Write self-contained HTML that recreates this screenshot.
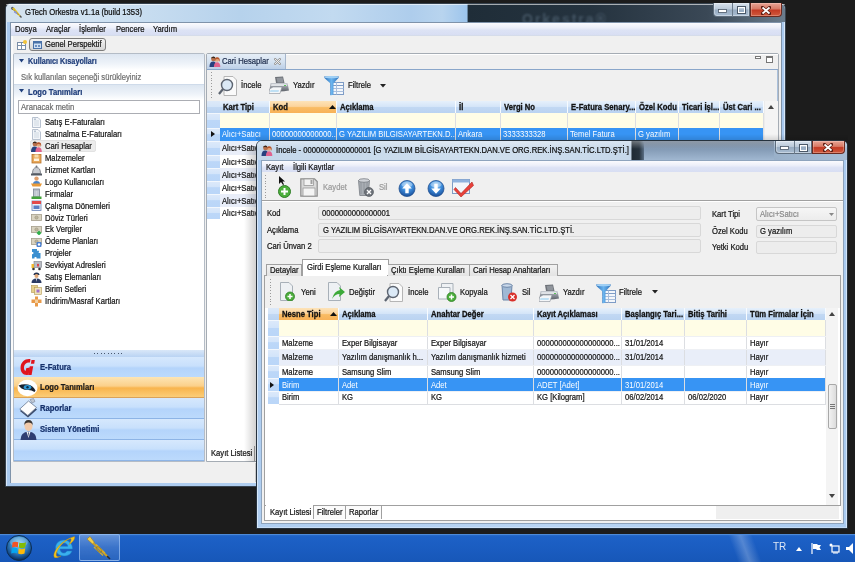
<!DOCTYPE html>
<html><head><meta charset="utf-8">
<style>
*{margin:0;padding:0;box-sizing:border-box}
html,body{width:855px;height:562px;overflow:hidden}
body{position:relative;background:#1b1b1b;font-family:"Liberation Sans",sans-serif;font-size:8px;color:#141414}
.a{position:absolute}
.t{position:absolute;white-space:nowrap;line-height:1;transform-origin:0 0;-webkit-text-stroke:0.22px currentColor}
.b{font-weight:bold}
</style></head><body>

<div class="a" style="left:0px;top:0px;width:855px;height:534px;background:#1c1c1c"></div>
<div class="a" style="left:5px;top:3px;width:781px;height:484px;border-radius:6px 6px 0 0;border:1px solid #36424e;background:linear-gradient(90deg,#a9c9ee,#b4d0f0 50%,#a9c9ee)"></div>
<div class="a" style="left:6px;top:4px;width:779px;height:482px;border-radius:5px 5px 0 0;border:1px solid rgba(255,255,255,.55);border-bottom:none"></div>
<div class="a" style="left:6px;top:4px;width:779px;height:18px;border-radius:5px 5px 0 0;background:linear-gradient(90deg,#d4e2ee 0%,#d0e2f2 12%,#b6d2ec 30%,#c2daf0 42%,#aecdec 52%,#b8d4ee 56%,#9cc4ec 59.2%,#1f2d38 59.3%,#25333f 75%,#3a4856 90%,#6a7c8c 100%)"></div>
<div class="a" style="left:6px;top:4px;width:779px;height:1px;border-radius:5px 5px 0 0;background:rgba(255,255,255,.6)"></div>
<div class="a" style="left:518px;top:4px;width:200px;height:18px;overflow:hidden"><div class="t" style="left:4px;top:8px;font-size:14px;font-weight:bold;color:#445564;-webkit-text-stroke:0;letter-spacing:2px;filter:blur(1.3px)">Orkestra®</div></div>
<svg class="a" style="left:10px;top:6px" width="12" height="12" viewBox="0 0 12 12"><ellipse cx="2.6" cy="2.4" rx="1.8" ry="1.4" transform="rotate(45 2.6 2.4)" fill="#5a6070"/><path d="M2 2.6 L4 1.4 L10.5 9.5 L9.6 10.4 Z" fill="#e0c02a"/><path d="M3.5 4 L8.5 9" stroke="#8a7010" stroke-width="0.7"/><circle cx="5" cy="6" r="1.1" fill="#8a94d8"/><circle cx="6.4" cy="7.2" r="0.9" fill="#8a94d8"/><path d="M9.8 9.8 L11.5 11.5" stroke="#555" stroke-width="1.4"/></svg>
<div class="t" style="left:25px;top:8.14px;font-size:8.5px;transform:scaleX(0.9);color:#0e0e0e">GTech Orkestra v1.1a (build 1353)</div>
<div class="a" style="left:713px;top:3px;width:37px;height:14px;border:1px solid #5d6c7c;border-top:none;border-radius:0 0 0 4px;background:linear-gradient(#d9e3ee,#b9c8d8 48%,#97abc1 52%,#a9bdd2);box-shadow:inset 0 0 0 1px rgba(255,255,255,.35)"></div>
<div class="a" style="left:732px;top:3px;width:1px;height:14px;background:#6a7a8a"></div>
<div class="a" style="left:750px;top:3px;width:32px;height:14px;border:1px solid #6a2a20;border-top:none;border-radius:0 0 4px 0;background:linear-gradient(#e9a596,#d87a66 45%,#c43a24 55%,#cf5a3e);box-shadow:inset 0 0 0 1px rgba(255,230,220,.3)"></div>
<svg class="a" style="left:718px;top:8.5px" width="9" height="4" viewBox="0 0 9 4"><rect x="0.5" y="0.5" width="8" height="3" fill="#fff" stroke="#4a5868" stroke-width="0.8"/></svg>
<svg class="a" style="left:737px;top:6.0px" width="9" height="8" viewBox="0 0 9 8"><rect x="0.8" y="0.8" width="7.4" height="6.4" fill="none" stroke="#4a5868" stroke-width="1.6"/><rect x="1.5" y="1.5" width="6" height="5" fill="none" stroke="#fff" stroke-width="1"/></svg>
<svg class="a" style="left:761px;top:5.5px" width="10" height="9" viewBox="0 0 10 9"><path d="M1.5 1.5 L8.5 7.5 M8.5 1.5 L1.5 7.5" stroke="#5a1a10" stroke-width="3.2" stroke-linecap="square"/><path d="M1.5 1.5 L8.5 7.5 M8.5 1.5 L1.5 7.5" stroke="#fff" stroke-width="1.8"/></svg>
<div class="a" style="left:10px;top:22px;width:772px;height:461px;background:#f0f0f0;border:1px solid #7f93aa"></div>
<div class="a" style="left:11px;top:23px;width:770px;height:12px;background:linear-gradient(#fbfbfe,#eceff9 40%,#dde3f5 60%,#d8def3)"></div>
<div class="a" style="left:11px;top:35px;width:770px;height:1px;background:#d5dcea"></div>
<div class="t" style="left:15px;top:24.84px;font-size:8.5px;transform:scaleX(0.9);">Dosya</div>
<div class="t" style="left:46px;top:24.84px;font-size:8.5px;transform:scaleX(0.9);">Araçlar</div>
<div class="t" style="left:79px;top:24.84px;font-size:8.5px;transform:scaleX(0.9);">İşlemler</div>
<div class="t" style="left:116px;top:24.84px;font-size:8.5px;transform:scaleX(0.9);">Pencere</div>
<div class="t" style="left:153px;top:24.84px;font-size:8.5px;transform:scaleX(0.9);">Yardım</div>
<svg class="a" style="left:17px;top:40px" width="10" height="10" viewBox="0 0 10 10"><rect x="0.5" y="2.5" width="8" height="7" fill="#fff" stroke="#7a8ea8"/><line x1="0.5" y1="5.5" x2="8.5" y2="5.5" stroke="#7a8ea8"/><line x1="4.5" y1="2.5" x2="4.5" y2="9.5" stroke="#7a8ea8"/><circle cx="8" cy="2" r="2" fill="#f3c53a"/></svg>
<div class="a" style="left:29px;top:38px;width:77px;height:13px;border:1px solid #7d7d7d;border-radius:3px;background:linear-gradient(#f6f6f6,#e3e3e3 50%,#d6d6d6)"></div>
<svg class="a" style="left:33px;top:41px" width="9" height="8" viewBox="0 0 9 8"><rect x="0.5" y="0.5" width="8" height="7" fill="#cfe0f4" stroke="#4a72a8"/><rect x="0.5" y="0.5" width="8" height="2" fill="#4a72a8"/><rect x="2" y="4" width="2" height="2" fill="#6d8fbf"/><rect x="5" y="4" width="2" height="2" fill="#6d8fbf"/></svg>
<div class="t" style="left:45px;top:40.34px;font-size:8.5px;transform:scaleX(0.9);">Genel Perspektif</div>
<div class="a" style="left:13px;top:53px;width:192px;height:409px;background:#fff;border:1px solid #b4bcc6;border-radius:2px 2px 0 0"></div>
<div class="a" style="left:11px;top:36px;width:2px;height:426px;background:#fafafa"></div>
<div class="a" style="left:14px;top:54px;width:190px;height:16px;background:linear-gradient(#dde6f1,#eef3f9 60%,#fff)"></div>
<svg class="a" style="left:19px;top:59px" width="5" height="4" viewBox="0 0 5 4"><path d="M0 0 H5 L2.5 3.5 Z" fill="#1f3f7c"/></svg>
<div class="t" style="left:28.4px;top:57.34px;font-size:8.5px;transform:scaleX(0.85);color:#1d3b78;font-weight:bold">Kullanıcı Kısayolları</div>
<div class="t" style="left:21px;top:73.43px;font-size:8.5px;transform:scaleX(0.9);color:#707070">Sık kullanılan seçeneği sürükleyiniz</div>
<div class="a" style="left:14px;top:84px;width:190px;height:1px;background:#cfdbea"></div>
<div class="a" style="left:14px;top:85px;width:190px;height:15px;background:linear-gradient(#dde6f1,#eef3f9 60%,#fff)"></div>
<svg class="a" style="left:19px;top:89px" width="5" height="4" viewBox="0 0 5 4"><path d="M0 0 H5 L2.5 3.5 Z" fill="#1f3f7c"/></svg>
<div class="t" style="left:28px;top:87.63px;font-size:8.5px;transform:scaleX(0.9);color:#1d3b78;font-weight:bold">Logo Tanımları</div>
<div class="a" style="left:18px;top:100px;width:182px;height:14px;border:1px solid #abadb3;background:#fff"></div>
<div class="t" style="left:21px;top:102.83px;font-size:8.5px;transform:scaleX(0.9);color:#6d6d6d">Aranacak metin</div>
<svg class="a" style="left:31px;top:117px" width="11" height="11" viewBox="0 0 11 11"><path d="M1.5 0.5 H7 L9.5 3 V10.5 H1.5 Z" fill="#f2f5f9" stroke="#a7b4c4" stroke-width="0.8"/><path d="M3 4 H8 M3 6 H8 M3 8 H8" stroke="#c5d0dc" stroke-width="0.8"/><rect x="3" y="1.5" width="2" height="1.5" fill="#b8c4d2"/></svg>
<div class="t" style="left:45px;top:118.33px;font-size:8.5px;transform:scaleX(0.9);">Satış E-Faturaları</div>
<svg class="a" style="left:31px;top:129px" width="11" height="11" viewBox="0 0 11 11"><path d="M1.5 0.5 H7 L9.5 3 V10.5 H1.5 Z" fill="#f2f5f9" stroke="#a7b4c4" stroke-width="0.8"/><path d="M3 4 H8 M3 6 H8 M3 8 H8" stroke="#c5d0dc" stroke-width="0.8"/><rect x="3" y="1.5" width="2" height="1.5" fill="#b8c4d2"/></svg>
<div class="t" style="left:45px;top:130.24px;font-size:8.5px;transform:scaleX(0.9);">Satınalma E-Faturaları</div>
<div class="a" style="left:30px;top:140.3px;width:66px;height:12px;background:#ececec;border:1px solid #e2e2e2;border-radius:2px"></div>
<svg class="a" style="left:31px;top:141px" width="11" height="11" viewBox="0 0 11 11"><circle cx="3.8" cy="3" r="2.2" fill="#b8704a"/><path d="M3.8 0.6 Q1.4 0.8 1.6 3 L2 2.2 Q3.8 1.6 5.8 2.4 Q6 0.8 3.8 0.6Z" fill="#3b2a1e"/><path d="M0 11 Q0 5.6 3.8 5.6 Q6.8 5.6 6.8 11 Z" fill="#27407e"/><circle cx="7.6" cy="3.6" r="2.2" fill="#e2a67a"/><path d="M7.6 1.2 Q5 1.2 5.2 4.6 L5.6 6 L6 3.4 Q7.6 2.4 9.4 3.4 L9.8 6 L10.2 4.6 Q10.4 1.2 7.6 1.2Z" fill="#b5562c"/><path d="M4.4 11 Q4.4 6.2 7.6 6.2 Q10.8 6.2 10.8 11 Z" fill="#e0628e"/></svg>
<div class="t" style="left:45px;top:142.14px;font-size:8.5px;transform:scaleX(0.9);">Cari Hesaplar</div>
<svg class="a" style="left:31px;top:153px" width="11" height="11" viewBox="0 0 11 11"><rect x="1" y="1.5" width="9" height="8.5" fill="#e9a95a" stroke="#b8752e" stroke-width="0.8"/><rect x="3.5" y="1.5" width="4" height="3" fill="#f6dcae"/><rect x="3" y="5.5" width="5" height="2.5" fill="#fff3de"/></svg>
<div class="t" style="left:45px;top:154.03px;font-size:8.5px;transform:scaleX(0.9);">Malzemeler</div>
<svg class="a" style="left:31px;top:165px" width="11" height="11" viewBox="0 0 11 11"><path d="M1.5 8.5 Q1.5 2.5 5.5 2.5 Q9.5 2.5 9.5 8.5 Z" fill="#c9ccd2" stroke="#6e737b" stroke-width="0.8"/><rect x="0" y="8.5" width="11" height="2" fill="#555b64"/><circle cx="5.5" cy="1.5" r="1" fill="#6e737b"/></svg>
<div class="t" style="left:45px;top:165.94px;font-size:8.5px;transform:scaleX(0.9);">Hizmet Kartları</div>
<svg class="a" style="left:31px;top:176px" width="11" height="11" viewBox="0 0 11 11"><circle cx="5.5" cy="2.6" r="2.2" fill="#e0a070"/><path d="M2 8 Q2 5 5.5 5 Q9 5 9 8 Z" fill="#4a84c8"/><path d="M0 7.5 H11 L9.5 10.5 H1.5 Z" fill="#e89a3a"/></svg>
<div class="t" style="left:45px;top:177.84px;font-size:8.5px;transform:scaleX(0.9);">Logo Kullanıcıları</div>
<svg class="a" style="left:31px;top:188px" width="11" height="11" viewBox="0 0 11 11"><rect x="2.5" y="1" width="6" height="8" fill="#b7bec8" stroke="#7d8794" stroke-width="0.8"/><path d="M4 3 V8 M5.5 3 V8 M7 3 V8" stroke="#dfe4ea" stroke-width="0.6"/><rect x="0.5" y="8.5" width="10" height="2.5" fill="#43a33b"/></svg>
<div class="t" style="left:45px;top:189.74px;font-size:8.5px;transform:scaleX(0.9);">Firmalar</div>
<svg class="a" style="left:31px;top:200px" width="11" height="11" viewBox="0 0 11 11"><rect x="1" y="1" width="9" height="9.5" fill="#e9f0fa" stroke="#6a86b8" stroke-width="0.8"/><rect x="1" y="1" width="9" height="3" fill="#e34a4a"/><rect x="2.5" y="5.5" width="6" height="3.5" fill="#5a7fc4"/></svg>
<div class="t" style="left:45px;top:201.64px;font-size:8.5px;transform:scaleX(0.9);">Çalışma Dönemleri</div>
<svg class="a" style="left:31px;top:212px" width="11" height="11" viewBox="0 0 11 11"><rect x="0.5" y="2.5" width="10" height="6" fill="#d9d3c0" stroke="#a59f8c" stroke-width="0.8"/><circle cx="5.5" cy="5.5" r="1.6" fill="#bdb59c" stroke="#8f8874" stroke-width="0.5"/></svg>
<div class="t" style="left:45px;top:213.53px;font-size:8.5px;transform:scaleX(0.9);">Döviz Türleri</div>
<svg class="a" style="left:31px;top:224px" width="11" height="11" viewBox="0 0 11 11"><rect x="0.5" y="2.5" width="10" height="6" fill="#d9d3c0" stroke="#a59f8c" stroke-width="0.8"/><circle cx="5.5" cy="5.5" r="1.6" fill="#bdb59c" stroke="#8f8874" stroke-width="0.5"/><path d="M8 6.5 L10.5 9 L8 11.5 L5.5 9 Z" fill="#2fb04a"/></svg>
<div class="t" style="left:45px;top:225.44px;font-size:8.5px;transform:scaleX(0.9);">Ek Vergiler</div>
<svg class="a" style="left:31px;top:236px" width="11" height="11" viewBox="0 0 11 11"><rect x="0.5" y="2.5" width="10" height="6" fill="#d9d3c0" stroke="#a59f8c" stroke-width="0.8"/><circle cx="5.5" cy="5.5" r="1.6" fill="#bdb59c" stroke="#8f8874" stroke-width="0.5"/><rect x="5.5" y="6" width="5" height="5" rx="1" fill="#4a7fd0"/><circle cx="8" cy="8.5" r="1.2" fill="#fff"/></svg>
<div class="t" style="left:45px;top:237.34px;font-size:8.5px;transform:scaleX(0.9);">Ödeme Planları</div>
<svg class="a" style="left:31px;top:248px" width="11" height="11" viewBox="0 0 11 11"><path d="M3 1 H6 V3 Q7.5 2 8 3.5 Q8.5 5 6.5 5 H9.5 V10.5 H5.5 Q6 9 4.5 9 Q3 9 3.5 10.5 H1 V6 Q2.5 6.5 2.5 5 Q2.5 3.5 1 4 V1 Z" fill="#3a8fd0"/></svg>
<div class="t" style="left:45px;top:249.24px;font-size:8.5px;transform:scaleX(0.9);">Projeler</div>
<svg class="a" style="left:31px;top:260px" width="11" height="11" viewBox="0 0 11 11"><rect x="3" y="1.5" width="7.5" height="6" fill="#b8bcc4" stroke="#7a7f88" stroke-width="0.6"/><path d="M0.5 4 H3 V8 H0.5 Z" fill="#f0b830"/><circle cx="2.5" cy="9" r="1.3" fill="#333"/><circle cx="8.5" cy="9" r="1.3" fill="#333"/><path d="M6 5 Q6 3.8 7 3.8 Q8 3.8 8 5 L7 7.5 Z" fill="#e0303a"/></svg>
<div class="t" style="left:45px;top:261.13px;font-size:8.5px;transform:scaleX(0.9);">Sevkiyat Adresleri</div>
<svg class="a" style="left:31px;top:272px" width="11" height="11" viewBox="0 0 11 11"><path d="M2.5 3 Q2.5 0.5 5.5 0.5 Q8.5 0.5 8.5 3 Z" fill="#22304e"/><circle cx="5.5" cy="4" r="2" fill="#e0a878"/><path d="M0.5 11 Q0.5 6.5 5.5 6.5 Q10.5 6.5 10.5 11 Z" fill="#2a3a62"/><path d="M5 6.5 L5.5 10 L6 6.5 Z" fill="#fff"/></svg>
<div class="t" style="left:45px;top:273.04px;font-size:8.5px;transform:scaleX(0.9);">Satış Elemanları</div>
<svg class="a" style="left:31px;top:284px" width="11" height="11" viewBox="0 0 11 11"><rect x="0.5" y="1.5" width="6" height="7" fill="#e6cf8c" stroke="#b49a52" stroke-width="0.6"/><rect x="3.5" y="3.5" width="7" height="7" fill="#efe2b8" stroke="#b49a52" stroke-width="0.6"/><rect x="5.5" y="5.5" width="3" height="3" fill="#a070c8"/></svg>
<div class="t" style="left:45px;top:284.94px;font-size:8.5px;transform:scaleX(0.9);">Birim Setleri</div>
<svg class="a" style="left:31px;top:296px" width="11" height="11" viewBox="0 0 11 11"><path d="M4 0.5 H7 V3.5 H10.5 V7 H7 V10.5 H4 V7 H0.5 V3.5 H4 Z" fill="#e89a4a"/><rect x="4" y="3.5" width="3" height="3.5" fill="#f4d0a0"/></svg>
<div class="t" style="left:45px;top:296.83px;font-size:8.5px;transform:scaleX(0.9);">İndirim/Masraf Kartları</div>
<div class="a" style="left:14px;top:350px;width:190px;height:7px;background:linear-gradient(#d9e7f8,#b9d3f3)"></div>
<div class="a" style="left:94.0px;top:353px;width:1px;height:1px;background:#4a5a70"></div>
<div class="a" style="left:97.4px;top:353px;width:1px;height:1px;background:#4a5a70"></div>
<div class="a" style="left:100.8px;top:353px;width:1px;height:1px;background:#4a5a70"></div>
<div class="a" style="left:104.2px;top:353px;width:1px;height:1px;background:#4a5a70"></div>
<div class="a" style="left:107.6px;top:353px;width:1px;height:1px;background:#4a5a70"></div>
<div class="a" style="left:111.0px;top:353px;width:1px;height:1px;background:#4a5a70"></div>
<div class="a" style="left:114.4px;top:353px;width:1px;height:1px;background:#4a5a70"></div>
<div class="a" style="left:117.8px;top:353px;width:1px;height:1px;background:#4a5a70"></div>
<div class="a" style="left:121.2px;top:353px;width:1px;height:1px;background:#4a5a70"></div>
<div class="a" style="left:14px;top:357px;width:190px;height:21px;background:linear-gradient(#d6e8fd,#c8e0fc 45%,#b4d4fb 55%,#bcdafc);border-bottom:1px solid #8db4e6"></div>
<div class="t" style="left:39.5px;top:363.33px;font-size:8.5px;transform:scaleX(0.9);color:#15306a;font-weight:bold">E-Fatura</div>
<div class="a" style="left:14px;top:377px;width:190px;height:21px;background:linear-gradient(#fde5b4,#fbd08a 45%,#f8b44d 55%,#fbcd78);border-bottom:1px solid #d9a25a"></div>
<div class="t" style="left:39.5px;top:383.33px;font-size:8.5px;transform:scaleX(0.9);color:#1a1a1a;font-weight:bold">Logo Tanımları</div>
<div class="a" style="left:14px;top:398px;width:190px;height:21px;background:linear-gradient(#d6e8fd,#c8e0fc 45%,#b4d4fb 55%,#bcdafc);border-bottom:1px solid #8db4e6"></div>
<div class="t" style="left:39.5px;top:404.33px;font-size:8.5px;transform:scaleX(0.9);color:#15306a;font-weight:bold">Raporlar</div>
<div class="a" style="left:14px;top:419px;width:190px;height:21px;background:linear-gradient(#d6e8fd,#c8e0fc 45%,#b4d4fb 55%,#bcdafc);border-bottom:1px solid #8db4e6"></div>
<div class="t" style="left:39.5px;top:425.33px;font-size:8.5px;transform:scaleX(0.9);color:#15306a;font-weight:bold">Sistem Yönetimi</div>
<div class="a" style="left:14px;top:440px;width:190px;height:21px;background:linear-gradient(#d6e8fd,#c8e0fc 45%,#b4d4fb 55%,#bcdafc);border-bottom:1px solid #8db4e6"></div>
<svg class="a" style="left:19px;top:358px" width="17" height="18" viewBox="0 0 17 18"><path d="M11.5 1.2 C6 0.5 2 4 1.6 9 C1.2 14 4 17.2 8 17 L9.5 16.8 L11 9.5 L7.2 10.2 L6.8 12.8 C5.2 12.6 4.8 11 5 9 C5.4 5.5 8 4 11 4.5 Z" fill="#e0141e"/><path d="M10.8 8.2 H14.2 L12.6 17 H9.2 Z" fill="#e0141e"/><path d="M12.5 2 H15.8 L15.2 5.8 H11.9 Z" fill="#e0141e"/></svg>
<svg class="a" style="left:17px;top:379px" width="21" height="18" viewBox="0 0 21 18"><ellipse cx="10.5" cy="9" rx="10" ry="8.3" fill="#fff"/><path d="M1.5 6.5 Q6 4.5 11 5.5 Q16 6.5 18.5 11.5 L17.5 13 Q14 10.5 10 11 Q5 10.5 3 8 Z" fill="#1a2330"/><ellipse cx="10.5" cy="8.3" rx="3.8" ry="2.4" fill="#2f9ad8"/><circle cx="10.5" cy="8.3" r="1.2" fill="#0d2a44"/></svg>
<svg class="a" style="left:19px;top:398px" width="19" height="20" viewBox="0 0 19 20"><path d="M1 13 L10 5 L18 11.5 L9 19.5 Z" fill="#3a4a6a"/><path d="M0.8 11 L9.5 3 L17.5 9.5 L8.8 17.5 Z" fill="#fdfdfd" stroke="#6a7890" stroke-width="0.8"/><path d="M11 1.5 L14.5 0.5 L16 3.5 L13 5 Z" fill="#c0c8d4" stroke="#7a8498" stroke-width="0.6"/></svg>
<svg class="a" style="left:20px;top:419px" width="17" height="21" viewBox="0 0 17 21"><path d="M0.5 21 Q0.5 13 8.5 12.5 Q16.5 13 16.5 21 Z" fill="#2e3d72"/><path d="M6.5 12.8 L8.5 19 L10.5 12.8 Z" fill="#f4f4f4"/><path d="M8 13.5 L8.5 18 L9 13.5 Z" fill="#253060"/><ellipse cx="8.5" cy="7" rx="4" ry="5" fill="#f0c8a8"/><path d="M4.3 6.5 Q4 1 8.5 1 Q13 1 12.7 6.5 Q12 3.5 8.5 3.5 Q5 3.5 4.3 6.5 Z" fill="#3a3430"/></svg>
<div class="a" style="left:206px;top:53px;width:573px;height:409px;background:#f0f0f0;border:1px solid #a5acb4;border-radius:2px 2px 0 0"></div>
<div class="a" style="left:207px;top:54px;width:571px;height:15px;background:#f0f0f0;border-top:1px solid #fff;border-left:1px solid #fff"></div>
<div class="a" style="left:207px;top:54px;width:79px;height:15px;background:linear-gradient(#e6eef7,#d3e1f0 55%,#bccfe7);border-right:1px solid #a5b6cc"></div>
<svg class="a" style="left:209px;top:56px" width="12" height="11" viewBox="0 0 11 11"><circle cx="3.8" cy="3" r="2.2" fill="#b8704a"/><path d="M3.8 0.6 Q1.4 0.8 1.6 3 L2 2.2 Q3.8 1.6 5.8 2.4 Q6 0.8 3.8 0.6Z" fill="#3b2a1e"/><path d="M0 11 Q0 5.6 3.8 5.6 Q6.8 5.6 6.8 11 Z" fill="#27407e"/><circle cx="7.6" cy="3.6" r="2.2" fill="#e2a67a"/><path d="M7.6 1.2 Q5 1.2 5.2 4.6 L5.6 6 L6 3.4 Q7.6 2.4 9.4 3.4 L9.8 6 L10.2 4.6 Q10.4 1.2 7.6 1.2Z" fill="#b5562c"/><path d="M4.4 11 Q4.4 6.2 7.6 6.2 Q10.8 6.2 10.8 11 Z" fill="#e0628e"/></svg>
<div class="t" style="left:222px;top:57.34px;font-size:8.5px;transform:scaleX(0.9);color:#1b2a4a">Cari Hesaplar</div>
<svg class="a" style="left:274px;top:58px" width="7" height="7" viewBox="0 0 7 7"><path d="M1 1 L6 6 M6 1 L1 6" stroke="#9a9a9a" stroke-width="2.4" stroke-linecap="round"/><path d="M1 1 L6 6 M6 1 L1 6" stroke="#f4f4f4" stroke-width="0.9" stroke-linecap="round"/></svg>
<div class="a" style="left:755px;top:56px;width:6px;height:3px;border:1px solid #777;background:#fff"></div>
<div class="a" style="left:766px;top:56px;width:7px;height:7px;border:1px solid #777;border-top-width:2px;background:#fff"></div>
<div class="a" style="left:207px;top:69px;width:571px;height:1px;background:#8aa6ca"></div>
<div class="a" style="left:777px;top:70px;width:1px;height:391px;background:#a9c0dc"></div>
<div class="a" style="left:211px;top:72.0px;width:1px;height:1px;background:#9a9a9a"></div>
<div class="a" style="left:211px;top:74.8px;width:1px;height:1px;background:#9a9a9a"></div>
<div class="a" style="left:211px;top:77.6px;width:1px;height:1px;background:#9a9a9a"></div>
<div class="a" style="left:211px;top:80.4px;width:1px;height:1px;background:#9a9a9a"></div>
<div class="a" style="left:211px;top:83.2px;width:1px;height:1px;background:#9a9a9a"></div>
<div class="a" style="left:211px;top:86.0px;width:1px;height:1px;background:#9a9a9a"></div>
<div class="a" style="left:211px;top:88.8px;width:1px;height:1px;background:#9a9a9a"></div>
<div class="a" style="left:211px;top:91.6px;width:1px;height:1px;background:#9a9a9a"></div>
<div class="a" style="left:211px;top:94.4px;width:1px;height:1px;background:#9a9a9a"></div>
<div class="a" style="left:211px;top:97.2px;width:1px;height:1px;background:#9a9a9a"></div>
<svg class="a" style="left:218px;top:76px" width="19" height="20" viewBox="0 0 19 20"><path d="M6 0.5 H15 L18.5 4 V19.5 H6 Z" fill="#fafafa" stroke="#b5b5b5"/><circle cx="9" cy="9" r="5.5" fill="#dbe9f6" stroke="#5c6470" stroke-width="1.4"/><path d="M5 13 L1 18" stroke="#5c6470" stroke-width="2.2"/></svg>
<div class="t" style="left:241px;top:81.43px;font-size:8.5px;transform:scaleX(0.9);">İncele</div>
<svg class="a" style="left:269px;top:76px" width="21" height="18" viewBox="0 0 21 18"><defs><linearGradient id="pg1" x1="0" y1="0" x2="0" y2="1"><stop offset="0" stop-color="#c8ccd2"/><stop offset="0.5" stop-color="#8e939b"/><stop offset="1" stop-color="#5d626a"/></linearGradient></defs><path d="M6 1 L14 0.5 L15.5 7 H7 Z" fill="#6d7178"/><path d="M7.5 2 L13.5 1.6 L14.5 6.5 H8.5 Z" fill="#8f949b"/><path d="M1.5 7 H18.5 L20 14.5 Q10 16.5 0.5 14.5 Z" fill="url(#pg1)"/><path d="M2.5 8 H17.5 L18 10 H2 Z" fill="#dfe2e6"/><path d="M0.5 13 L4 11 H13 L11 17.5 H0 Z" fill="#f4f6f8" stroke="#8a9098" stroke-width="0.6"/><path d="M1.5 14 H10 L9.5 16 H1 Z" fill="#bfe0f4"/><rect x="15" y="9" width="2" height="1" fill="#58c058"/></svg>
<div class="t" style="left:293px;top:81.43px;font-size:8.5px;transform:scaleX(0.9);">Yazdır</div>
<svg class="a" style="left:324px;top:76px" width="20" height="20" viewBox="0 0 20 20"><defs><linearGradient id="fg1" x1="0" x2="1"><stop offset="0" stop-color="#2d6fb8"/><stop offset="0.5" stop-color="#6ab4ee"/><stop offset="1" stop-color="#2d6fb8"/></linearGradient></defs><rect x="6.5" y="6.5" width="13" height="12" fill="#f4f7fb" stroke="#7e9cc6"/><line x1="6.5" y1="9.5" x2="19.5" y2="9.5" stroke="#7e9cc6"/><line x1="6.5" y1="12.5" x2="19.5" y2="12.5" stroke="#a9bedc"/><line x1="6.5" y1="15.5" x2="19.5" y2="15.5" stroke="#a9bedc"/><line x1="12.5" y1="6.5" x2="12.5" y2="18.5" stroke="#a9bedc"/><path d="M0 0.5 H15 Q15 2 13 3.5 L9.5 7.5 V18.5 L6.5 19.5 V7.5 L2 3.5 Q0 2 0 0.5 Z" fill="url(#fg1)"/><ellipse cx="7.5" cy="1.2" rx="7.3" ry="1.1" fill="#9fd0f6"/></svg>
<div class="t" style="left:348px;top:81.43px;font-size:8.5px;transform:scaleX(0.9);">Filtrele</div>
<svg class="a" style="left:380px;top:84px" width="6" height="4" viewBox="0 0 6 4"><path d="M0 0 H6 L3 3.5 Z" fill="#222"/></svg>
<div class="a" style="left:207px;top:101px;width:571px;height:360px;background:#fff"></div>
<div class="a" style="left:207px;top:101px;width:557px;height:12px;background:linear-gradient(#e6f0fb,#d3e4f8 50%,#c2d8f3 51%,#bad3f1)"></div>
<div class="a" style="left:270px;top:101px;width:67px;height:12px;background:linear-gradient(#fde3b8,#fcd49c 45%,#f9bc64 55%,#f8b258)"></div>
<div class="a" style="left:269px;top:101px;width:1px;height:12px;background:#f7fbff"></div>
<div class="t" style="left:223px;top:102.83px;font-size:8.5px;transform:scaleX(0.9);font-weight:bold;color:#121212;-webkit-text-stroke:0.3px #121212">Kart Tipi</div>
<div class="a" style="left:336px;top:101px;width:1px;height:12px;background:#f7fbff"></div>
<div class="t" style="left:273px;top:102.83px;font-size:8.5px;transform:scaleX(0.9);font-weight:bold;color:#121212;-webkit-text-stroke:0.3px #121212">Kod</div>
<div class="a" style="left:455px;top:101px;width:1px;height:12px;background:#f7fbff"></div>
<div class="t" style="left:340px;top:102.83px;font-size:8.5px;transform:scaleX(0.9);font-weight:bold;color:#121212;-webkit-text-stroke:0.3px #121212">Açıklama</div>
<div class="a" style="left:500px;top:101px;width:1px;height:12px;background:#f7fbff"></div>
<div class="t" style="left:459px;top:102.83px;font-size:8.5px;transform:scaleX(0.9);font-weight:bold;color:#121212;-webkit-text-stroke:0.3px #121212">İl</div>
<div class="a" style="left:567px;top:101px;width:1px;height:12px;background:#f7fbff"></div>
<div class="t" style="left:504px;top:102.83px;font-size:8.5px;transform:scaleX(0.9);font-weight:bold;color:#121212;-webkit-text-stroke:0.3px #121212">Vergi No</div>
<div class="a" style="left:635px;top:101px;width:1px;height:12px;background:#f7fbff"></div>
<div class="t" style="left:571px;top:102.83px;font-size:8.5px;transform:scaleX(0.9);font-weight:bold;color:#121212;-webkit-text-stroke:0.3px #121212">E-Fatura Senary...</div>
<div class="a" style="left:678px;top:101px;width:1px;height:12px;background:#f7fbff"></div>
<div class="t" style="left:639px;top:102.83px;font-size:8.5px;transform:scaleX(0.9);font-weight:bold;color:#121212;-webkit-text-stroke:0.3px #121212">Özel Kodu</div>
<div class="a" style="left:719px;top:101px;width:1px;height:12px;background:#f7fbff"></div>
<div class="t" style="left:682px;top:102.83px;font-size:8.5px;transform:scaleX(0.9);font-weight:bold;color:#121212;-webkit-text-stroke:0.3px #121212">Ticari İşl...</div>
<div class="a" style="left:763px;top:101px;width:1px;height:12px;background:#f7fbff"></div>
<div class="t" style="left:723px;top:102.83px;font-size:8.5px;transform:scaleX(0.9);font-weight:bold;color:#121212;-webkit-text-stroke:0.3px #121212">Üst Cari ...</div>
<svg class="a" style="left:329px;top:105px" width="7" height="4" viewBox="0 0 7 4"><path d="M0 4 H7 L3.5 0 Z" fill="#111"/></svg>
<div class="a" style="left:207px;top:101px;width:13px;height:12px;background:linear-gradient(#dde9f8,#d3e4f8 50%,#c2d8f3 51%,#bad3f1)"></div>
<div class="a" style="left:207px;top:113px;width:13px;height:15px;background:linear-gradient(#dce9fa,#d2e4fa 45%,#bcd7f8 46%,#bad6f8);border-top:1px solid #f2f7fd"></div>
<div class="a" style="left:207px;top:128px;width:13px;height:12.5px;background:linear-gradient(#dce9fa,#d2e4fa 45%,#bcd7f8 46%,#bad6f8);border-top:1px solid #f2f7fd"></div>
<div class="a" style="left:207px;top:140.5px;width:13px;height:14.5px;background:linear-gradient(#dce9fa,#d2e4fa 45%,#bcd7f8 46%,#bad6f8);border-top:1px solid #f2f7fd"></div>
<div class="a" style="left:207px;top:155px;width:13px;height:13px;background:linear-gradient(#dce9fa,#d2e4fa 45%,#bcd7f8 46%,#bad6f8);border-top:1px solid #f2f7fd"></div>
<div class="a" style="left:207px;top:168px;width:13px;height:13px;background:linear-gradient(#dce9fa,#d2e4fa 45%,#bcd7f8 46%,#bad6f8);border-top:1px solid #f2f7fd"></div>
<div class="a" style="left:207px;top:181px;width:13px;height:13px;background:linear-gradient(#dce9fa,#d2e4fa 45%,#bcd7f8 46%,#bad6f8);border-top:1px solid #f2f7fd"></div>
<div class="a" style="left:207px;top:194px;width:13px;height:12.5px;background:linear-gradient(#dce9fa,#d2e4fa 45%,#bcd7f8 46%,#bad6f8);border-top:1px solid #f2f7fd"></div>
<div class="a" style="left:207px;top:206.5px;width:13px;height:12.0px;background:linear-gradient(#dce9fa,#d2e4fa 45%,#bcd7f8 46%,#bad6f8);border-top:1px solid #f2f7fd"></div>
<div class="a" style="left:220px;top:113px;width:544px;height:15px;background:#fffde6"></div>
<div class="a" style="left:220px;top:128px;width:544px;height:12.5px;background:#3794f4"></div>
<div class="a" style="left:269px;top:113px;width:1px;height:105px;background:#dcdee2"></div>
<div class="a" style="left:336px;top:113px;width:1px;height:105px;background:#dcdee2"></div>
<div class="a" style="left:455px;top:113px;width:1px;height:105px;background:#dcdee2"></div>
<div class="a" style="left:500px;top:113px;width:1px;height:105px;background:#dcdee2"></div>
<div class="a" style="left:567px;top:113px;width:1px;height:105px;background:#dcdee2"></div>
<div class="a" style="left:635px;top:113px;width:1px;height:105px;background:#dcdee2"></div>
<div class="a" style="left:678px;top:113px;width:1px;height:105px;background:#dcdee2"></div>
<div class="a" style="left:719px;top:113px;width:1px;height:105px;background:#dcdee2"></div>
<div class="a" style="left:763px;top:113px;width:1px;height:105px;background:#dcdee2"></div>
<svg class="a" style="left:211px;top:131px" width="4" height="6" viewBox="0 0 4 6"><path d="M0 0 L4 3 L0 6 Z" fill="#111"/></svg>
<div class="t" style="left:222px;top:130.14px;font-size:8.5px;transform:scaleX(0.9);width:52.22px;overflow:hidden;padding-bottom:2px;color:#fff;-webkit-text-stroke:0">Alıcı+Satıcı</div>
<div class="t" style="left:272px;top:130.14px;font-size:8.5px;transform:scaleX(0.9);width:71.11px;overflow:hidden;padding-bottom:2px;color:#fff;-webkit-text-stroke:0">00000000000000...</div>
<div class="t" style="left:339px;top:130.14px;font-size:8.5px;transform:scaleX(0.9);width:128.89px;overflow:hidden;padding-bottom:2px;color:#fff;-webkit-text-stroke:0">G YAZILIM BİLGİSAYARTEKN.D...</div>
<div class="t" style="left:458px;top:130.14px;font-size:8.5px;transform:scaleX(0.9);width:46.67px;overflow:hidden;padding-bottom:2px;color:#fff;-webkit-text-stroke:0">Ankara</div>
<div class="t" style="left:503px;top:130.14px;font-size:8.5px;transform:scaleX(0.9);width:71.11px;overflow:hidden;padding-bottom:2px;color:#fff;-webkit-text-stroke:0">3333333328</div>
<div class="t" style="left:570px;top:130.14px;font-size:8.5px;transform:scaleX(0.9);width:72.22px;overflow:hidden;padding-bottom:2px;color:#fff;-webkit-text-stroke:0">Temel Fatura</div>
<div class="t" style="left:638px;top:130.14px;font-size:8.5px;transform:scaleX(0.9);width:44.44px;overflow:hidden;padding-bottom:2px;color:#fff;-webkit-text-stroke:0">G yazılım</div>
<div class="a" style="left:220px;top:140.5px;width:544px;height:14.5px;background:#e9eef9"></div>
<div class="t" style="left:222px;top:144.09px;font-size:8.5px;transform:scaleX(0.9);">Alıcı+Satıcı</div>
<div class="t" style="left:222px;top:157.84px;font-size:8.5px;transform:scaleX(0.9);">Alıcı+Satıcı</div>
<div class="a" style="left:220px;top:168px;width:544px;height:13px;background:#e9eef9"></div>
<div class="t" style="left:222px;top:170.84px;font-size:8.5px;transform:scaleX(0.9);">Alıcı+Satıcı</div>
<div class="t" style="left:222px;top:183.84px;font-size:8.5px;transform:scaleX(0.9);">Alıcı+Satıcı</div>
<div class="a" style="left:220px;top:194px;width:544px;height:12.5px;background:#e9eef9"></div>
<div class="t" style="left:222px;top:196.59px;font-size:8.5px;transform:scaleX(0.9);">Alıcı+Satıcı</div>
<div class="t" style="left:222px;top:208.84px;font-size:8.5px;transform:scaleX(0.9);">Alıcı+Satıcı</div>
<div class="a" style="left:764px;top:101px;width:14px;height:360px;background:#f4f4f4;border-left:1px solid #ececec"></div>
<svg class="a" style="left:768px;top:105px" width="6" height="4" viewBox="0 0 6 4"><path d="M0 4 H6 L3 0 Z" fill="#444"/></svg>
<div class="a" style="left:207px;top:446px;width:48px;height:15px;background:#fff;border-right:1px solid #a5a5a5"></div>
<div class="t" style="left:211px;top:448.83px;font-size:8.5px;transform:scaleX(0.9);">Kayıt Listesi</div>
<div class="a" style="left:11px;top:462px;width:770px;height:21px;background:#f0f0f0"></div>
<div class="a" style="left:255px;top:463px;width:1px;height:19px;background:#c8c8c8"></div>
<div class="a" style="left:244px;top:146px;width:12px;height:316px;background:linear-gradient(90deg,rgba(0,0,0,0),rgba(0,0,0,.18))"></div>
<div class="a" style="left:256px;top:134px;width:592px;height:6px;background:linear-gradient(rgba(0,0,0,0),rgba(0,0,0,.12))"></div>
<div class="a" style="left:256px;top:140px;width:592px;height:389px;border-radius:6px 6px 0 0;border:1px solid #26323e;background:linear-gradient(90deg,#aecdf0,#b9d5f4 50%,#aacbf0)"></div>
<div class="a" style="left:257px;top:141px;width:590px;height:387px;border-radius:5px 5px 0 0;border:1px solid rgba(255,255,255,.5);border-bottom-color:rgba(255,255,255,.3)"></div>
<div class="a" style="left:257px;top:141px;width:590px;height:19px;border-radius:5px 5px 0 0;background:linear-gradient(90deg,#c4d7ea 0%,#d0dfee 40%,#c6d8ea 63.3%,#2a3540 63.6%,#1e2830 65%,#5a6e84 66.5%,#8aa2bc 72%,#a6bcd4 100%)"></div>
<div class="a" style="left:642px;top:141px;width:132px;height:19px;background:linear-gradient(#53647a,#8299b4 40%,#a0b7d0 100%)"></div>
<div class="a" style="left:632px;top:141px;width:12px;height:19px;background:linear-gradient(90deg,#1f2a34,#27333e 60%,#5a6e84)"></div>
<div class="a" style="left:257px;top:141px;width:590px;height:8px;border-radius:5px 5px 0 0;background:linear-gradient(rgba(255,255,255,.35),rgba(255,255,255,0))"></div>
<svg class="a" style="left:261px;top:145px" width="12" height="11" viewBox="0 0 11 11"><circle cx="3.8" cy="3" r="2.2" fill="#b8704a"/><path d="M3.8 0.6 Q1.4 0.8 1.6 3 L2 2.2 Q3.8 1.6 5.8 2.4 Q6 0.8 3.8 0.6Z" fill="#3b2a1e"/><path d="M0 11 Q0 5.6 3.8 5.6 Q6.8 5.6 6.8 11 Z" fill="#27407e"/><circle cx="7.6" cy="3.6" r="2.2" fill="#e2a67a"/><path d="M7.6 1.2 Q5 1.2 5.2 4.6 L5.6 6 L6 3.4 Q7.6 2.4 9.4 3.4 L9.8 6 L10.2 4.6 Q10.4 1.2 7.6 1.2Z" fill="#b5562c"/><path d="M4.4 11 Q4.4 6.2 7.6 6.2 Q10.8 6.2 10.8 11 Z" fill="#e0628e"/></svg>
<div class="t" style="left:275.5px;top:145.84px;font-size:8.5px;transform:scaleX(0.9);color:#0e0e0e">İncele - 0000000000000001 [G YAZILIM BİLGİSAYARTEKN.DAN.VE ORG.REK.İNŞ.SAN.TİC.LTD.ŞTİ.]</div>
<div class="a" style="left:774.5px;top:141px;width:37px;height:13px;border:1px solid #5d6c7c;border-top:none;border-radius:0 0 0 4px;background:linear-gradient(#d9e3ee,#b9c8d8 48%,#97abc1 52%,#a9bdd2);box-shadow:inset 0 0 0 1px rgba(255,255,255,.35)"></div>
<div class="a" style="left:793.5px;top:141px;width:1px;height:13px;background:#6a7a8a"></div>
<div class="a" style="left:811.5px;top:141px;width:33px;height:13px;border:1px solid #6a2a20;border-top:none;border-radius:0 0 4px 0;background:linear-gradient(#e9a596,#d87a66 45%,#c43a24 55%,#cf5a3e);box-shadow:inset 0 0 0 1px rgba(255,230,220,.3)"></div>
<svg class="a" style="left:779.5px;top:146.0px" width="9" height="4" viewBox="0 0 9 4"><rect x="0.5" y="0.5" width="8" height="3" fill="#fff" stroke="#4a5868" stroke-width="0.8"/></svg>
<svg class="a" style="left:798.5px;top:143.5px" width="9" height="8" viewBox="0 0 9 8"><rect x="0.8" y="0.8" width="7.4" height="6.4" fill="none" stroke="#4a5868" stroke-width="1.6"/><rect x="1.5" y="1.5" width="6" height="5" fill="none" stroke="#fff" stroke-width="1"/></svg>
<svg class="a" style="left:822.5px;top:143.0px" width="10" height="9" viewBox="0 0 10 9"><path d="M1.5 1.5 L8.5 7.5 M8.5 1.5 L1.5 7.5" stroke="#5a1a10" stroke-width="3.2" stroke-linecap="square"/><path d="M1.5 1.5 L8.5 7.5 M8.5 1.5 L1.5 7.5" stroke="#fff" stroke-width="1.8"/></svg>
<div class="a" style="left:261px;top:160px;width:583px;height:364px;background:#f0f0f0;border:1px solid #8ea4bd"></div>
<div class="a" style="left:262px;top:161px;width:581px;height:11px;background:linear-gradient(#fbfbfe,#eceff9 40%,#dde3f5 60%,#d8def3)"></div>
<div class="t" style="left:266px;top:162.84px;font-size:8.5px;transform:scaleX(0.9);">Kayıt</div>
<div class="t" style="left:293px;top:162.84px;font-size:8.5px;transform:scaleX(0.9);">İlgili Kayıtlar</div>
<div class="a" style="left:265px;top:175.0px;width:1px;height:1px;background:#9a9a9a"></div>
<div class="a" style="left:265px;top:177.8px;width:1px;height:1px;background:#9a9a9a"></div>
<div class="a" style="left:265px;top:180.6px;width:1px;height:1px;background:#9a9a9a"></div>
<div class="a" style="left:265px;top:183.4px;width:1px;height:1px;background:#9a9a9a"></div>
<div class="a" style="left:265px;top:186.2px;width:1px;height:1px;background:#9a9a9a"></div>
<div class="a" style="left:265px;top:189.0px;width:1px;height:1px;background:#9a9a9a"></div>
<div class="a" style="left:265px;top:191.8px;width:1px;height:1px;background:#9a9a9a"></div>
<div class="a" style="left:265px;top:194.6px;width:1px;height:1px;background:#9a9a9a"></div>
<div class="a" style="left:265px;top:197.4px;width:1px;height:1px;background:#9a9a9a"></div>
<svg class="a" style="left:278px;top:185px" width="13" height="13" viewBox="0 0 13 13"><circle cx="6.5" cy="6.5" r="6" fill="#4cae3c" stroke="#2f7d25"/><path d="M6.5 3 V10 M3 6.5 H10" stroke="#fff" stroke-width="2"/></svg>
<svg class="a" style="left:279px;top:176px" width="6" height="9" viewBox="0 0 6 9"><path d="M0 0 V8 L2 6 L4 9 L5 8.5 L3.5 5.5 H6 Z" fill="#111"/></svg>
<svg class="a" style="left:300px;top:178px" width="18" height="19" viewBox="0 0 18 19"><path d="M0.8 0.8 H14.5 L17.2 3.5 V18.2 H0.8 Z" fill="#d9d9d9" stroke="#8e8e8e" stroke-width="1.2"/><rect x="4" y="1" width="9.5" height="6.5" fill="#f2f2f2" stroke="#9a9a9a" stroke-width="0.8"/><rect x="10.5" y="2" width="2" height="4" fill="#a0a0a0"/><rect x="3" y="10" width="12" height="8" fill="#f4f4f4" stroke="#9a9a9a" stroke-width="0.8"/></svg>
<div class="t" style="left:322.6px;top:182.84px;font-size:8.5px;transform:scaleX(0.9);color:#9a9a9a">Kaydet</div>
<svg class="a" style="left:357px;top:178px" width="17" height="19" viewBox="0 0 17 19"><path d="M1.5 2.5 H12.5 L11.2 17.5 H2.8 Z" fill="#a9aeb4" stroke="#787d84" stroke-width="0.8"/><path d="M4 4 V16 M7 4 V16 M10 4 V16" stroke="#8c9198" stroke-width="0.8"/><ellipse cx="7" cy="2.5" rx="5.5" ry="1.8" fill="#d0d3d8" stroke="#787d84" stroke-width="0.8"/><circle cx="12" cy="14" r="4.5" fill="#6e737a" stroke="#4e5258" stroke-width="0.6"/><path d="M10 12 L14 16 M14 12 L10 16" stroke="#fff" stroke-width="1.3"/></svg>
<div class="t" style="left:379px;top:182.84px;font-size:8.5px;transform:scaleX(0.9);color:#9a9a9a">Sil</div>
<svg class="a" style="left:398px;top:180px" width="18" height="17" viewBox="0 0 18 17"><defs><radialGradient id="agu" cx="50%" cy="30%" r="70%"><stop offset="0" stop-color="#9fd2fa"/><stop offset="0.5" stop-color="#3d8ddc"/><stop offset="1" stop-color="#1a4f9a"/></radialGradient></defs><circle cx="9" cy="8.5" r="8" fill="url(#agu)" stroke="#1f4f8f" stroke-width="0.8"/><ellipse cx="9" cy="4.5" rx="5.5" ry="3" fill="rgba(255,255,255,.35)"/><path d="M9 3.2 L13.8 8.5 H10.7 V13.2 H7.3 V8.5 H4.2 Z" fill="#fff"/></svg>
<svg class="a" style="left:427px;top:180px" width="18" height="17" viewBox="0 0 18 17"><defs><radialGradient id="agd" cx="50%" cy="30%" r="70%"><stop offset="0" stop-color="#9fd2fa"/><stop offset="0.5" stop-color="#3d8ddc"/><stop offset="1" stop-color="#1a4f9a"/></radialGradient></defs><circle cx="9" cy="8.5" r="8" fill="url(#agd)" stroke="#1f4f8f" stroke-width="0.8"/><ellipse cx="9" cy="4.5" rx="5.5" ry="3" fill="rgba(255,255,255,.35)"/><path d="M9 13.8 L13.8 8.5 H10.7 V3.8 H7.3 V8.5 H4.2 Z" fill="#fff"/></svg>
<svg class="a" style="left:452px;top:178px" width="22" height="19" viewBox="0 0 22 19"><rect x="0.5" y="1.5" width="17" height="14" fill="#f2f6fb" stroke="#7f9cc4"/><rect x="0.5" y="1.5" width="17" height="3" fill="#8fb2de"/><path d="M3.5 9.5 L9 15.5 L20 4 L21.5 7.5 L9 19 L2 11.5 Z" fill="#e8413a" stroke="#b02420" stroke-width="0.6"/></svg>
<div class="a" style="left:262px;top:200px;width:581px;height:1px;background:#a0a0a0"></div>
<div class="a" style="left:262px;top:201px;width:581px;height:1px;background:#fff"></div>
<div class="t" style="left:267px;top:209.24px;font-size:8.5px;transform:scaleX(0.9);">Kod</div>
<div class="a" style="left:318px;top:206px;width:383px;height:14px;border:1px solid #d8d8d8;background:#ededed;border-radius:2px"></div>
<div class="t" style="left:322px;top:209.24px;font-size:8.5px;transform:scaleX(0.9);">0000000000000001</div>
<div class="t" style="left:267px;top:225.84px;font-size:8.5px;transform:scaleX(0.9);">Açıklama</div>
<div class="a" style="left:318px;top:222.5px;width:383px;height:14px;border:1px solid #d8d8d8;background:#ededed;border-radius:2px"></div>
<div class="t" style="left:322.5px;top:225.84px;font-size:8.5px;transform:scaleX(0.9);">G YAZILIM BİLGİSAYARTEKN.DAN.VE ORG.REK.İNŞ.SAN.TİC.LTD.ŞTİ.</div>
<div class="t" style="left:267px;top:242.24px;font-size:8.5px;transform:scaleX(0.9);">Cari Ünvan 2</div>
<div class="a" style="left:318px;top:239px;width:383px;height:14px;border:1px solid #d8d8d8;background:#ededed;border-radius:2px"></div>
<div class="t" style="left:712px;top:209.84px;font-size:8.5px;transform:scaleX(0.9);">Kart Tipi</div>
<div class="a" style="left:756px;top:207px;width:81px;height:14px;border:1px solid #c5c5c5;background:linear-gradient(#f6f6f6,#ececec);border-radius:2px"></div>
<div class="t" style="left:760px;top:209.84px;font-size:8.5px;transform:scaleX(0.9);color:#8a8a8a">Alıcı+Satıcı</div>
<svg class="a" style="left:829px;top:213px" width="5" height="3" viewBox="0 0 5 3"><path d="M0 0 H5 L2.5 3 Z" fill="#888"/></svg>
<div class="t" style="left:712px;top:226.84px;font-size:8.5px;transform:scaleX(0.9);">Özel Kodu</div>
<div class="a" style="left:756px;top:225px;width:81px;height:13px;border:1px solid #d8d8d8;background:#ededed;border-radius:2px"></div>
<div class="t" style="left:760px;top:226.84px;font-size:8.5px;transform:scaleX(0.9);">G yazılım</div>
<div class="t" style="left:712px;top:242.84px;font-size:8.5px;transform:scaleX(0.9);">Yetki Kodu</div>
<div class="a" style="left:756px;top:241px;width:81px;height:13px;border:1px solid #d8d8d8;background:#ededed;border-radius:2px"></div>
<div class="a" style="left:264px;top:274.5px;width:577px;height:246px;background:#fff;border:1px solid #a0a0a0"></div>
<div class="a" style="left:266px;top:264px;width:36px;height:12px;border:1px solid #a0a0a0;border-bottom:none;background:linear-gradient(#f2f2f2,#e3e3e3)"></div>
<div class="t" style="left:270px;top:265.83px;font-size:8.5px;transform:scaleX(0.9);">Detaylar</div>
<div class="a" style="left:302px;top:259.3px;width:86.5px;height:16px;border:1px solid #a0a0a0;border-bottom:none;background:#fff"></div>
<div class="t" style="left:307.4px;top:262.53px;font-size:8.5px;transform:scaleX(0.9);">Girdi Eşleme Kuralları</div>
<div class="a" style="left:388px;top:264px;width:82px;height:12px;border:1px solid #a0a0a0;border-bottom:none;border-left:none;background:linear-gradient(#f2f2f2,#e3e3e3)"></div>
<div class="t" style="left:391px;top:265.83px;font-size:8.5px;transform:scaleX(0.9);">Çıktı Eşleme Kuralları</div>
<div class="a" style="left:470px;top:264px;width:88px;height:12px;border:1px solid #a0a0a0;border-bottom:none;border-left:none;background:linear-gradient(#f2f2f2,#e3e3e3)"></div>
<div class="t" style="left:473px;top:265.83px;font-size:8.5px;transform:scaleX(0.9);">Cari Hesap Anahtarları</div>
<div class="a" style="left:303px;top:275px;width:84px;height:1px;background:#fff"></div>
<div class="a" style="left:265px;top:275.5px;width:575px;height:32.5px;background:#f0f0f0"></div>
<div class="a" style="left:270px;top:279.0px;width:1px;height:1px;background:#9a9a9a"></div>
<div class="a" style="left:270px;top:281.8px;width:1px;height:1px;background:#9a9a9a"></div>
<div class="a" style="left:270px;top:284.6px;width:1px;height:1px;background:#9a9a9a"></div>
<div class="a" style="left:270px;top:287.4px;width:1px;height:1px;background:#9a9a9a"></div>
<div class="a" style="left:270px;top:290.2px;width:1px;height:1px;background:#9a9a9a"></div>
<div class="a" style="left:270px;top:293.0px;width:1px;height:1px;background:#9a9a9a"></div>
<div class="a" style="left:270px;top:295.8px;width:1px;height:1px;background:#9a9a9a"></div>
<div class="a" style="left:270px;top:298.6px;width:1px;height:1px;background:#9a9a9a"></div>
<div class="a" style="left:270px;top:301.4px;width:1px;height:1px;background:#9a9a9a"></div>
<div class="a" style="left:270px;top:304.2px;width:1px;height:1px;background:#9a9a9a"></div>
<svg class="a" style="left:280px;top:282px" width="15" height="19" viewBox="0 0 15 19"><path d="M0.5 0.5 H9 L12.5 4 V18.5 H0.5 Z" fill="#eef1f4" stroke="#a8b0b8"/><circle cx="10" cy="14.5" r="4.5" fill="#4cae3c" stroke="#2f7d25" stroke-width="0.8"/><path d="M10 12 V17 M7.5 14.5 H12.5" stroke="#fff" stroke-width="1.5"/></svg>
<svg class="a" style="left:328px;top:282px" width="17" height="19" viewBox="0 0 17 19"><path d="M0.5 0.5 H9 L12.5 4 V18.5 H0.5 Z" fill="#eef1f4" stroke="#a8b0b8"/><path d="M4 17 Q6 9 12 8 L11 5 L17 10 L11 15 L11.5 12 Q7 12 4 17 Z" fill="#3daa3a"/></svg>
<svg class="a" style="left:384px;top:283px" width="20" height="19" viewBox="0 0 20 19"><path d="M6 0.5 H15 L18.5 4 V18.5 H6 Z" fill="#fafafa" stroke="#b5b5b5"/><circle cx="9" cy="9" r="5.5" fill="#dbe9f6" stroke="#5c6470" stroke-width="1.4"/><path d="M5 13 L1 18" stroke="#5c6470" stroke-width="2.2"/></svg>
<svg class="a" style="left:438px;top:283px" width="19" height="19" viewBox="0 0 19 19"><path d="M3.5 0.5 H15 V12 H3.5 Z" fill="#eef1f4" stroke="#a8b0b8"/><path d="M0.5 4.5 H12 V16 H0.5 Z" fill="#f6f8fa" stroke="#a8b0b8"/><circle cx="13.5" cy="14" r="4.5" fill="#4cae3c" stroke="#2f7d25" stroke-width="0.8"/><path d="M13.5 11.5 V16.5 M11 14 H16" stroke="#fff" stroke-width="1.5"/></svg>
<svg class="a" style="left:500px;top:283px" width="18" height="19" viewBox="0 0 18 19"><path d="M2 2 H12 L11 17 H3 Z" fill="#9fb8d4" stroke="#6d86a8"/><ellipse cx="7" cy="2.5" rx="5" ry="1.8" fill="#c9d8ea" stroke="#6d86a8"/><circle cx="12.5" cy="14" r="4.5" fill="#d9302a"/><path d="M10.5 12 L14.5 16 M14.5 12 L10.5 16" stroke="#fff" stroke-width="1.2"/></svg>
<svg class="a" style="left:539px;top:284px" width="21" height="18" viewBox="0 0 21 18"><defs><linearGradient id="pg2" x1="0" y1="0" x2="0" y2="1"><stop offset="0" stop-color="#c8ccd2"/><stop offset="0.5" stop-color="#8e939b"/><stop offset="1" stop-color="#5d626a"/></linearGradient></defs><path d="M6 1 L14 0.5 L15.5 7 H7 Z" fill="#6d7178"/><path d="M7.5 2 L13.5 1.6 L14.5 6.5 H8.5 Z" fill="#8f949b"/><path d="M1.5 7 H18.5 L20 14.5 Q10 16.5 0.5 14.5 Z" fill="url(#pg2)"/><path d="M2.5 8 H17.5 L18 10 H2 Z" fill="#dfe2e6"/><path d="M0.5 13 L4 11 H13 L11 17.5 H0 Z" fill="#f4f6f8" stroke="#8a9098" stroke-width="0.6"/><path d="M1.5 14 H10 L9.5 16 H1 Z" fill="#bfe0f4"/><rect x="15" y="9" width="2" height="1" fill="#58c058"/></svg>
<svg class="a" style="left:596px;top:284px" width="20" height="20" viewBox="0 0 20 20"><defs><linearGradient id="fg2" x1="0" x2="1"><stop offset="0" stop-color="#2d6fb8"/><stop offset="0.5" stop-color="#6ab4ee"/><stop offset="1" stop-color="#2d6fb8"/></linearGradient></defs><rect x="6.5" y="6.5" width="13" height="12" fill="#f4f7fb" stroke="#7e9cc6"/><line x1="6.5" y1="9.5" x2="19.5" y2="9.5" stroke="#7e9cc6"/><line x1="6.5" y1="12.5" x2="19.5" y2="12.5" stroke="#a9bedc"/><line x1="6.5" y1="15.5" x2="19.5" y2="15.5" stroke="#a9bedc"/><line x1="12.5" y1="6.5" x2="12.5" y2="18.5" stroke="#a9bedc"/><path d="M0 0.5 H15 Q15 2 13 3.5 L9.5 7.5 V18.5 L6.5 19.5 V7.5 L2 3.5 Q0 2 0 0.5 Z" fill="url(#fg2)"/><ellipse cx="7.5" cy="1.2" rx="7.3" ry="1.1" fill="#9fd0f6"/></svg>
<div class="t" style="left:301px;top:287.83px;font-size:8.5px;transform:scaleX(0.9);">Yeni</div>
<div class="t" style="left:348.7px;top:287.83px;font-size:8.5px;transform:scaleX(0.9);">Değiştir</div>
<div class="t" style="left:407.5px;top:287.83px;font-size:8.5px;transform:scaleX(0.9);">İncele</div>
<div class="t" style="left:460px;top:287.83px;font-size:8.5px;transform:scaleX(0.9);">Kopyala</div>
<div class="t" style="left:522px;top:287.83px;font-size:8.5px;transform:scaleX(0.9);">Sil</div>
<div class="t" style="left:563px;top:287.83px;font-size:8.5px;transform:scaleX(0.9);">Yazdır</div>
<div class="t" style="left:619px;top:287.83px;font-size:8.5px;transform:scaleX(0.9);">Filtrele</div>
<svg class="a" style="left:652px;top:290px" width="6" height="4" viewBox="0 0 6 4"><path d="M0 0 H6 L3 3.5 Z" fill="#222"/></svg>
<div class="a" style="left:267.5px;top:308px;width:558.5px;height:12px;background:linear-gradient(#e6f0fb,#d3e4f8 50%,#c2d8f3 51%,#bad3f1)"></div>
<div class="a" style="left:279px;top:308px;width:59.5px;height:12px;background:linear-gradient(#fde3b8,#fcd49c 45%,#f9bc64 55%,#f8b258)"></div>
<div class="a" style="left:337.5px;top:308px;width:1px;height:12px;background:#f7fbff"></div>
<div class="t" style="left:282px;top:309.83px;font-size:8.5px;transform:scaleX(0.9);font-weight:bold;color:#121212;-webkit-text-stroke:0.3px #121212">Nesne Tipi</div>
<div class="a" style="left:426.5px;top:308px;width:1px;height:12px;background:#f7fbff"></div>
<div class="t" style="left:341.5px;top:309.83px;font-size:8.5px;transform:scaleX(0.9);font-weight:bold;color:#121212;-webkit-text-stroke:0.3px #121212">Açıklama</div>
<div class="a" style="left:533px;top:308px;width:1px;height:12px;background:#f7fbff"></div>
<div class="t" style="left:430.5px;top:309.83px;font-size:8.5px;transform:scaleX(0.9);font-weight:bold;color:#121212;-webkit-text-stroke:0.3px #121212">Anahtar Değer</div>
<div class="a" style="left:621px;top:308px;width:1px;height:12px;background:#f7fbff"></div>
<div class="t" style="left:537px;top:309.83px;font-size:8.5px;transform:scaleX(0.9);font-weight:bold;color:#121212;-webkit-text-stroke:0.3px #121212">Kayıt Açıklaması</div>
<div class="a" style="left:683.5px;top:308px;width:1px;height:12px;background:#f7fbff"></div>
<div class="t" style="left:625px;top:309.83px;font-size:8.5px;transform:scaleX(0.9);font-weight:bold;color:#121212;-webkit-text-stroke:0.3px #121212">Başlangıç Tari...</div>
<div class="a" style="left:745.5px;top:308px;width:1px;height:12px;background:#f7fbff"></div>
<div class="t" style="left:687.5px;top:309.83px;font-size:8.5px;transform:scaleX(0.9);font-weight:bold;color:#121212;-webkit-text-stroke:0.3px #121212">Bitiş Tarihi</div>
<div class="a" style="left:825px;top:308px;width:1px;height:12px;background:#f7fbff"></div>
<div class="t" style="left:749.5px;top:309.83px;font-size:8.5px;transform:scaleX(0.9);font-weight:bold;color:#121212;-webkit-text-stroke:0.3px #121212">Tüm Firmalar İçin</div>
<svg class="a" style="left:330px;top:312px" width="7" height="4" viewBox="0 0 7 4"><path d="M0 4 H7 L3.5 0 Z" fill="#111"/></svg>
<div class="a" style="left:267.5px;top:308px;width:11.5px;height:12px;background:linear-gradient(#dde9f8,#d3e4f8 50%,#c2d8f3 51%,#bad3f1)"></div>
<div class="a" style="left:267.5px;top:320px;width:11.5px;height:15.5px;background:linear-gradient(#dce9fa,#d2e4fa 45%,#bcd7f8 46%,#bad6f8);border-top:1px solid #f2f7fd"></div>
<div class="a" style="left:267.5px;top:335.5px;width:11.5px;height:13.5px;background:linear-gradient(#dce9fa,#d2e4fa 45%,#bcd7f8 46%,#bad6f8);border-top:1px solid #f2f7fd"></div>
<div class="a" style="left:267.5px;top:349px;width:11.5px;height:15.5px;background:linear-gradient(#dce9fa,#d2e4fa 45%,#bcd7f8 46%,#bad6f8);border-top:1px solid #f2f7fd"></div>
<div class="a" style="left:267.5px;top:364.5px;width:11.5px;height:13.5px;background:linear-gradient(#dce9fa,#d2e4fa 45%,#bcd7f8 46%,#bad6f8);border-top:1px solid #f2f7fd"></div>
<div class="a" style="left:267.5px;top:378px;width:11.5px;height:12.5px;background:linear-gradient(#dce9fa,#d2e4fa 45%,#bcd7f8 46%,#bad6f8);border-top:1px solid #f2f7fd"></div>
<div class="a" style="left:267.5px;top:390.5px;width:11.5px;height:13.199999999999989px;background:linear-gradient(#dce9fa,#d2e4fa 45%,#bcd7f8 46%,#bad6f8);border-top:1px solid #f2f7fd"></div>
<div class="a" style="left:279px;top:320px;width:547px;height:15.5px;background:#fffde6"></div>
<div class="a" style="left:279px;top:349.0px;width:547px;height:15.5px;background:#e9eef9"></div>
<div class="a" style="left:279px;top:378px;width:547px;height:12.5px;background:#3794f4"></div>
<div class="a" style="left:337.5px;top:320px;width:1px;height:84px;background:#dcdee2"></div>
<div class="a" style="left:426.5px;top:320px;width:1px;height:84px;background:#dcdee2"></div>
<div class="a" style="left:533px;top:320px;width:1px;height:84px;background:#dcdee2"></div>
<div class="a" style="left:621px;top:320px;width:1px;height:84px;background:#dcdee2"></div>
<div class="a" style="left:683.5px;top:320px;width:1px;height:84px;background:#dcdee2"></div>
<div class="a" style="left:745.5px;top:320px;width:1px;height:84px;background:#dcdee2"></div>
<div class="a" style="left:825px;top:320px;width:1px;height:84px;background:#dcdee2"></div>
<div class="a" style="left:279px;top:403.5px;width:547px;height:1px;background:#dcdee2"></div>
<div class="a" style="left:279px;top:335.5px;width:547px;height:1px;background:#eef0f4"></div>
<div class="a" style="left:279px;top:349px;width:547px;height:1px;background:#eef0f4"></div>
<div class="a" style="left:279px;top:364.5px;width:547px;height:1px;background:#eef0f4"></div>
<div class="a" style="left:279px;top:390.5px;width:547px;height:1px;background:#eef0f4"></div>
<svg class="a" style="left:270px;top:381.5px" width="4" height="6" viewBox="0 0 4 6"><path d="M0 0 L4 3 L0 6 Z" fill="#111"/></svg>
<div class="t" style="left:282px;top:338.58px;font-size:8.5px;transform:scaleX(0.9);width:61.67px;overflow:hidden;padding-bottom:2px;">Malzeme</div>
<div class="t" style="left:341.5px;top:338.58px;font-size:8.5px;transform:scaleX(0.9);width:94.44px;overflow:hidden;padding-bottom:2px;">Exper Bilgisayar</div>
<div class="t" style="left:430.5px;top:338.58px;font-size:8.5px;transform:scaleX(0.9);width:113.89px;overflow:hidden;padding-bottom:2px;">Exper Bilgisayar</div>
<div class="t" style="left:537px;top:338.58px;font-size:8.5px;transform:scaleX(0.9);width:93.33px;overflow:hidden;padding-bottom:2px;">000000000000000000...</div>
<div class="t" style="left:625px;top:338.58px;font-size:8.5px;transform:scaleX(0.9);width:65.0px;overflow:hidden;padding-bottom:2px;">31/01/2014</div>
<div class="t" style="left:749.5px;top:338.58px;font-size:8.5px;transform:scaleX(0.9);width:83.89px;overflow:hidden;padding-bottom:2px;">Hayır</div>
<div class="t" style="left:282px;top:353.08px;font-size:8.5px;transform:scaleX(0.9);width:61.67px;overflow:hidden;padding-bottom:2px;">Malzeme</div>
<div class="t" style="left:341.5px;top:353.08px;font-size:8.5px;transform:scaleX(0.9);width:94.44px;overflow:hidden;padding-bottom:2px;">Yazılım danışmanlık h...</div>
<div class="t" style="left:430.5px;top:353.08px;font-size:8.5px;transform:scaleX(0.9);width:113.89px;overflow:hidden;padding-bottom:2px;">Yazılım danışmanlık hizmeti</div>
<div class="t" style="left:537px;top:353.08px;font-size:8.5px;transform:scaleX(0.9);width:93.33px;overflow:hidden;padding-bottom:2px;">000000000000000000...</div>
<div class="t" style="left:625px;top:353.08px;font-size:8.5px;transform:scaleX(0.9);width:65.0px;overflow:hidden;padding-bottom:2px;">31/01/2014</div>
<div class="t" style="left:749.5px;top:353.08px;font-size:8.5px;transform:scaleX(0.9);width:83.89px;overflow:hidden;padding-bottom:2px;">Hayır</div>
<div class="t" style="left:282px;top:367.58px;font-size:8.5px;transform:scaleX(0.9);width:61.67px;overflow:hidden;padding-bottom:2px;">Malzeme</div>
<div class="t" style="left:341.5px;top:367.58px;font-size:8.5px;transform:scaleX(0.9);width:94.44px;overflow:hidden;padding-bottom:2px;">Samsung Slim</div>
<div class="t" style="left:430.5px;top:367.58px;font-size:8.5px;transform:scaleX(0.9);width:113.89px;overflow:hidden;padding-bottom:2px;">Samsung Slim</div>
<div class="t" style="left:537px;top:367.58px;font-size:8.5px;transform:scaleX(0.9);width:93.33px;overflow:hidden;padding-bottom:2px;">000000000000000000...</div>
<div class="t" style="left:749.5px;top:367.58px;font-size:8.5px;transform:scaleX(0.9);width:83.89px;overflow:hidden;padding-bottom:2px;">Hayır</div>
<div class="t" style="left:282px;top:380.58px;font-size:8.5px;transform:scaleX(0.9);width:61.67px;overflow:hidden;padding-bottom:2px;color:#fff;-webkit-text-stroke:0">Birim</div>
<div class="t" style="left:341.5px;top:380.58px;font-size:8.5px;transform:scaleX(0.9);width:94.44px;overflow:hidden;padding-bottom:2px;color:#fff;-webkit-text-stroke:0">Adet</div>
<div class="t" style="left:430.5px;top:380.58px;font-size:8.5px;transform:scaleX(0.9);width:113.89px;overflow:hidden;padding-bottom:2px;color:#fff;-webkit-text-stroke:0">Adet</div>
<div class="t" style="left:537px;top:380.58px;font-size:8.5px;transform:scaleX(0.9);width:93.33px;overflow:hidden;padding-bottom:2px;color:#fff;-webkit-text-stroke:0">ADET [Adet]</div>
<div class="t" style="left:625px;top:380.58px;font-size:8.5px;transform:scaleX(0.9);width:65.0px;overflow:hidden;padding-bottom:2px;color:#fff;-webkit-text-stroke:0">31/01/2014</div>
<div class="t" style="left:749.5px;top:380.58px;font-size:8.5px;transform:scaleX(0.9);width:83.89px;overflow:hidden;padding-bottom:2px;color:#fff;-webkit-text-stroke:0">Hayır</div>
<div class="t" style="left:282px;top:393.44px;font-size:8.5px;transform:scaleX(0.9);width:61.67px;overflow:hidden;padding-bottom:2px;">Birim</div>
<div class="t" style="left:341.5px;top:393.44px;font-size:8.5px;transform:scaleX(0.9);width:94.44px;overflow:hidden;padding-bottom:2px;">KG</div>
<div class="t" style="left:430.5px;top:393.44px;font-size:8.5px;transform:scaleX(0.9);width:113.89px;overflow:hidden;padding-bottom:2px;">KG</div>
<div class="t" style="left:537px;top:393.44px;font-size:8.5px;transform:scaleX(0.9);width:93.33px;overflow:hidden;padding-bottom:2px;">KG [Kilogram]</div>
<div class="t" style="left:625px;top:393.44px;font-size:8.5px;transform:scaleX(0.9);width:65.0px;overflow:hidden;padding-bottom:2px;">06/02/2014</div>
<div class="t" style="left:687.5px;top:393.44px;font-size:8.5px;transform:scaleX(0.9);width:64.44px;overflow:hidden;padding-bottom:2px;">06/02/2020</div>
<div class="t" style="left:749.5px;top:393.44px;font-size:8.5px;transform:scaleX(0.9);width:83.89px;overflow:hidden;padding-bottom:2px;">Hayır</div>
<div class="a" style="left:826px;top:308px;width:12px;height:212px;background:#f4f4f4"></div>
<svg class="a" style="left:829px;top:312px" width="6" height="4" viewBox="0 0 6 4"><path d="M0 4 H6 L3 0 Z" fill="#444"/></svg>
<svg class="a" style="left:829px;top:494px" width="6" height="4" viewBox="0 0 6 4"><path d="M0 0 H6 L3 4 Z" fill="#444"/></svg>
<div class="a" style="left:828px;top:384px;width:9px;height:45px;border:1px solid #a8a8a8;border-radius:2px;background:linear-gradient(90deg,#f2f2f2,#dcdcdc)"></div>
<div class="a" style="left:830px;top:404px;width:5px;height:1px;background:#777"></div>
<div class="a" style="left:830px;top:406px;width:5px;height:1px;background:#777"></div>
<div class="a" style="left:830px;top:408px;width:5px;height:1px;background:#777"></div>
<div class="a" style="left:265px;top:505px;width:576px;height:15px;background:#fff;border-top:1px solid #a0a0a0"></div>
<div class="a" style="left:266px;top:505px;width:48px;height:14px;background:#fff;border-right:1px solid #a0a0a0"></div>
<div class="t" style="left:270px;top:507.83px;font-size:8.5px;transform:scaleX(0.9);">Kayıt Listesi</div>
<div class="a" style="left:314px;top:505px;width:32px;height:14px;border-right:1px solid #a0a0a0;border-top:1px solid #a0a0a0;background:#fbfbfb"></div>
<div class="t" style="left:317px;top:507.83px;font-size:8.5px;transform:scaleX(0.9);">Filtreler</div>
<div class="a" style="left:346px;top:505px;width:36px;height:14px;border-right:1px solid #a0a0a0;border-top:1px solid #a0a0a0;background:#fbfbfb"></div>
<div class="t" style="left:349px;top:507.83px;font-size:8.5px;transform:scaleX(0.9);">Raporlar</div>
<div class="a" style="left:716px;top:506px;width:123px;height:13px;background:#efefef"></div>
<div class="a" style="left:0px;top:533.5px;width:855px;height:28.5px;background:linear-gradient(#2f70cc 0%,#1d61c6 10%,#1a5cc0 55%,#1757b8)"></div>
<div class="a" style="left:0px;top:533.5px;width:855px;height:1px;background:#4d8ad8"></div>
<div class="a" style="left:720px;top:535px;width:50px;height:27px;background:linear-gradient(70deg,rgba(255,255,255,0) 30%,rgba(255,255,255,.25) 50%,rgba(255,255,255,0) 70%)"></div>
<svg class="a" style="left:5px;top:535px" width="28" height="26" viewBox="0 0 28 26"><defs><radialGradient id="orb" cx="50%" cy="35%" r="65%"><stop offset="0" stop-color="#8fd8f8"/><stop offset="0.45" stop-color="#3a8fd0"/><stop offset="0.8" stop-color="#16508f"/><stop offset="1" stop-color="#0a2850"/></radialGradient></defs><circle cx="14" cy="13" r="12.5" fill="url(#orb)" stroke="#0b2c52" stroke-width="1"/><ellipse cx="14" cy="7" rx="9" ry="5" fill="rgba(255,255,255,.22)"/><path d="M7.5 7.5 Q10 6 13.3 7.3 L12.8 12.4 Q10 11.2 7 12.6 Z" fill="#f35325"/><path d="M14.3 7.6 Q17.5 8.8 21 7.2 L20.3 12.3 Q17 13.8 13.8 12.6 Z" fill="#81bc06"/><path d="M6.8 13.6 Q10 12.2 12.7 13.4 L12.2 18.5 Q9.5 17.2 6.2 18.6 Z" fill="#05a6f0"/><path d="M13.7 13.6 Q17 14.8 20.2 13.3 L19.5 18.4 Q16.5 19.8 13.2 18.6 Z" fill="#ffba08"/></svg>
<svg class="a" style="left:52px;top:535px" width="24" height="23" viewBox="0 0 24 23"><path d="M12 5 C6.5 5 3.5 9 3.5 13 C3.5 18 7.5 21 12 21 C16 21 19 19 20 16 H15 C14.2 17.3 13.2 18 12 18 C9.5 18 8 16.3 8 14 H20.5 C20.5 8.5 17 5 12 5 Z M8.2 11.3 C8.5 9.5 10 8 12 8 C14.2 8 15.6 9.5 15.8 11.3 Z" fill="#3ab0ee" stroke="#1a7cc0" stroke-width="0.5"/><path d="M2 21.5 C0.5 17 9 5 22.5 1.5 C23.5 4.5 19 8.5 17 9.5 C19.5 6 19.5 3.5 18.5 3.5 C11 6 4 15 4.2 20 C4.3 22 7 22 9 21 C6 23 2 23.5 2 21.5 Z" fill="#f4c41c" stroke="#b8860b" stroke-width="0.4"/></svg>
<div class="a" style="left:79px;top:534px;width:41px;height:27px;border:1px solid rgba(170,205,250,.6);border-radius:2px;background:linear-gradient(rgba(255,255,255,.30),rgba(255,255,255,.14) 50%,rgba(255,255,255,.08))"></div>
<svg class="a" style="left:86px;top:536px" width="26" height="24" viewBox="0 0 26 24"><path d="M1 3 L4 0.5 L8.5 6.5 L6.5 8 Z" fill="#f2cf4a" stroke="#9a7410" stroke-width="0.5"/><path d="M7 7 L21.5 20.5" stroke="#caa024" stroke-width="2"/><path d="M8 11 L17 19.5 M10 8.5 L19 17" stroke="#d8b030" stroke-width="1.2"/><ellipse cx="13" cy="13.5" rx="3.5" ry="1.8" transform="rotate(45 13 13.5)" fill="none" stroke="#a07c14" stroke-width="0.8"/><path d="M21 20 L24 23" stroke="#303030" stroke-width="1.6"/></svg>
<div class="t" style="left:773px;top:540.65px;font-size:10.5px;transform:scaleX(0.95);color:#dfe8f5;-webkit-text-stroke:0">TR</div>
<svg class="a" style="left:796px;top:547px" width="6" height="4" viewBox="0 0 6 4"><path d="M0 4 H6 L3 0 Z" fill="#fff"/></svg>
<svg class="a" style="left:811px;top:543px" width="11" height="11" viewBox="0 0 11 11"><path d="M1 0 V11" stroke="#fff" stroke-width="1.2"/><path d="M2 1 H6 L7 2 H10 L8.5 4.5 L10 7 H6 L5 6 H2 Z" fill="#fff"/></svg>
<svg class="a" style="left:829px;top:543px" width="11" height="11" viewBox="0 0 11 11"><rect x="3" y="3" width="7" height="6" fill="none" stroke="#fff" stroke-width="1.2"/><circle cx="2" cy="2" r="1.5" fill="#fff"/><path d="M4 10 H9" stroke="#fff"/></svg>
<svg class="a" style="left:846px;top:543px" width="9" height="11" viewBox="0 0 9 11"><path d="M0 4 H3 L7 0 V11 L3 7 H0 Z" fill="#fff"/></svg>
</body></html>
